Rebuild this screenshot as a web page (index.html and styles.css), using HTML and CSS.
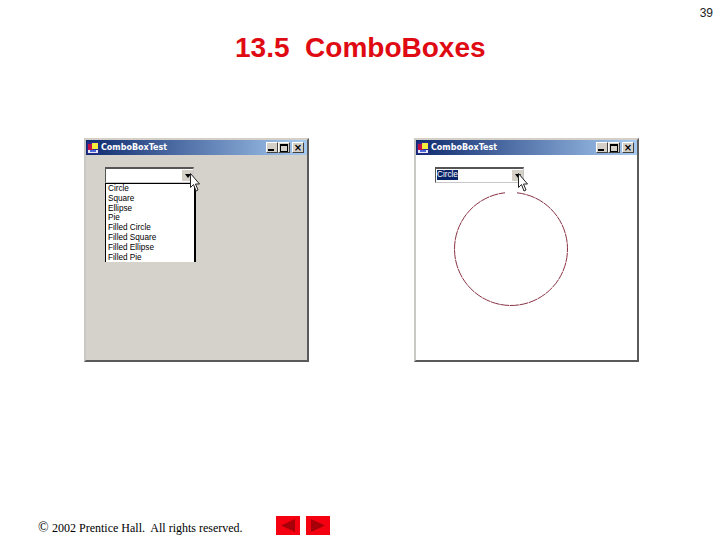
FILE: index.html
```html
<!DOCTYPE html>
<html lang="en">
<head>
<meta charset="utf-8">
<title>13.5 ComboBoxes</title>
<link rel="stylesheet" href="styles.css">
</head>
<body>
<main class="slide">
  <div class="page-number">39</div>
  <h1 class="title">13.5&nbsp; ComboBoxes</h1>
  <section class="windows">
    <article class="window window-gray">
      <header class="titlebar">
        <svg class="app-icon" viewBox="0 0 12 12"><rect width="12" height="12" fill="#2a2a8c"/><rect x="1" y="2" width="5" height="6" fill="#c0104a"/><rect x="5" y="1" width="6" height="6" fill="#f4ec3c"/><rect x="1" y="8" width="10" height="3" fill="#e8e8f4"/><rect x="3" y="8" width="6" height="2" fill="#4a6ad8"/></svg>
        <span class="caption">ComboBoxTest</span>
        <span class="controls">
          <span class="ctl"><span class="min"></span></span>
          <span class="ctl"><span class="max"></span></span>
          <span class="ctl ctl-close">×</span>
        </span>
      </header>
      <div class="client">
        <div class="combo">
          <span class="combo-text"></span>
          <span class="combo-btn"><span class="arrow"></span></span>
        </div>
        <ul class="list">
          <li>Circle</li><li>Square</li><li>Ellipse</li><li>Pie</li>
          <li>Filled Circle</li><li>Filled Square</li><li>Filled Ellipse</li><li>Filled Pie</li>
        </ul>
        <svg class="cursor" viewBox="0 0 10 19"><path d="M.5.5v14l3-3 2.500 6.500 2-1-2.500-6h4z" fill="#fff" stroke="#222" stroke-width="1"/></svg>
      </div>
    </article>
    <article class="window window-white">
      <header class="titlebar">
        <svg class="app-icon" viewBox="0 0 12 12"><rect width="12" height="12" fill="#2a2a8c"/><rect x="1" y="2" width="5" height="6" fill="#c0104a"/><rect x="5" y="1" width="6" height="6" fill="#f4ec3c"/><rect x="1" y="8" width="10" height="3" fill="#e8e8f4"/><rect x="3" y="8" width="6" height="2" fill="#4a6ad8"/></svg>
        <span class="caption">ComboBoxTest</span>
        <span class="controls">
          <span class="ctl"><span class="min"></span></span>
          <span class="ctl"><span class="max"></span></span>
          <span class="ctl ctl-close">×</span>
        </span>
      </header>
      <div class="client">
        <div class="combo">
          <span class="combo-text"><span class="selected">Circle</span></span>
          <span class="combo-btn"><span class="arrow"></span></span>
        </div>
        <svg class="circle" viewBox="0 0 116 116"><path d="M64 1.800A56.500 56.500 0 1 1 52 1.800" fill="none" stroke="#7a1c30" stroke-width=".9" stroke-dasharray="9 .6"/></svg>
        <svg class="cursor cursor-right" viewBox="0 0 10 19"><path d="M.5.5v14l3-3 2.500 6.500 2-1-2.500-6h4z" fill="#fff" stroke="#222" stroke-width="1"/></svg>
      </div>
    </article>
  </section>
  <footer class="footer">
    <span class="copyright"><span class="copy-mark">©</span>2002 Prentice Hall.&nbsp; All rights reserved.</span>
    <span class="nav">
      <svg class="nav-btn" viewBox="0 0 24 19"><rect width="24" height="19" fill="#f40010"/><path d="M5 9.500 19 3v13z" fill="#a80008"/></svg>
      <svg class="nav-btn" viewBox="0 0 24 19"><rect width="24" height="19" fill="#f40010"/><path d="M19 9.500 5 3v13z" fill="#a80008"/></svg>
    </span>
  </footer>
</main>
</body>
</html>
```

FILE: styles.css
```css
* { box-sizing: border-box; }
html, body { margin: 0; padding: 0; background: #fff; }
.slide { width: 720px; height: 540px; display: flex; flex-direction: column; overflow: hidden; }
.page-number { font: 12px/14px "Liberation Sans", sans-serif; text-align: right; padding: 6px 7px 0 0; color: #222; }
.title { margin: 13px 0 0 235px; font: bold 28px/30px "Liberation Sans", sans-serif; color: #e00a12; white-space: nowrap; }
.windows { display: flex; gap: 105px; padding: 75px 0 0 84px; }
.window { width: 225px; height: 224px; display: flex; flex-direction: column; background: #d5d2cc; border: 2px solid; border-color: #d4d0c8 #5a5a5a #5a5a5a #c8c8c4; }
.window-white .client { background: #fff; }
.titlebar { height: 15px; flex: none; padding: 0 3px 0 1px; display: flex; align-items: center; background: linear-gradient(90deg, #0e2a6e, #a6caf0); color: #fff; }
.app-icon { width: 12px; height: 12px; flex: none; }
.caption { margin-left: 2px; font: bold 8px/14px "DejaVu Sans", sans-serif; white-space: nowrap; }
.controls { margin-left: auto; display: flex; }
.ctl { width: 12px; height: 11px; background: #d4d0c8; border: 1px solid; border-color: #fff #404040 #404040 #fff; font: bold 10px/9px "DejaVu Sans", sans-serif; color: #000; text-align: center; display: flex; align-items: flex-end; justify-content: center; }
.ctl-close { margin-left: 2px; align-items: center; }
.min { width: 6px; height: 2px; background: #000; margin: 0 2px 1px 0; }
.max { width: 8px; height: 8px; border: 1px solid #000; border-top-width: 2px; }
.client { flex: 1; position: relative; padding: 12px 0 0 19px; }
.combo { width: 89px; height: 16px; display: flex; background: #fff; border: 1px solid; border-color: #555 #c8c8c8 #c8c8c8 #555; border-top-width: 2px; }
.combo-text { flex: 1; padding: 1px 0 0 1px; font: 8.200px/10px "Liberation Sans", sans-serif; }
.selected { display: inline-block; height: 10px; background: #0a246a; color: #fff; }
.combo-btn { width: 11px; margin: 1px 0; background: #d4d0c8; display: flex; align-items: center; justify-content: center; }
.arrow { width: 0; height: 0; border: 3.500px solid transparent; border-top: 4px solid #000; border-bottom: 0; }
.list { position: absolute; left: 19px; top: 28px; width: 91px; height: 79px; margin: 0; padding: 0 0 0 2px; list-style: none; background: #fff; border: 1px solid #000; border-width: 1px 2px 0 1px; overflow: hidden; font: 8.200px/9.800px "Liberation Sans", sans-serif; color: #000; }
.cursor { position: absolute; left: 104px; top: 18px; width: 10px; height: 19px; }
.cursor-right { left: 102px; }
.circle { position: absolute; left: 37px; top: 36px; width: 116px; height: 116px; }
.footer { margin-top: auto; padding: 0 0 5px 38px; display: flex; align-items: center; }
.copyright { padding-top: 5px; font: 12px/14px "Liberation Serif", serif; white-space: nowrap; }
.copy-mark { display: inline-block; width: 14px; font-size: 14px; line-height: 12px; }
.nav { display: flex; gap: 6px; margin-left: 33px; }
.nav-btn { width: 24px; height: 19px; display: block; }
```
